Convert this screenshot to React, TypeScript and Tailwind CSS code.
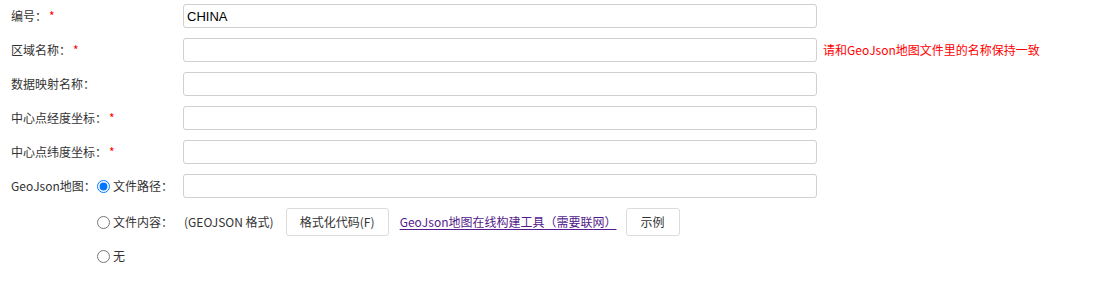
import React from 'react';

const font = { fontFamily: '"Noto Sans CJK SC", "Noto Sans", sans-serif' };

const Req = () => <span className="text-[#ff0000] ml-[2px]">*</span>;

const Field = ({ value = '' }: { value?: string }) => (
  <input
    defaultValue={value}
    className="w-[634px] h-[24px] border border-[#d0d0d0] rounded-[3px] px-[3px] text-[13px] text-black outline-none font-['Liberation_Sans',Arial,sans-serif]"
  />
);

const Radio = ({ checked = false, name }: { checked?: boolean; name: string }) => (
  <input type="radio" name={name} defaultChecked={checked} className="m-0 w-[13px] h-[13px] accent-[#0075ff]" />
);

export default function App() {
  return (
    <div className="w-[1095px] h-[290px] bg-white text-[12px] text-[#333]" style={font}>
      <div className="flex flex-col gap-[10px] pt-[4px]">
        <div className="flex items-center h-[24px]">
          <div className="w-[183px] pl-[11px]">编号：<Req /></div>
          <Field value="CHINA" />
        </div>
        <div className="flex items-center h-[24px]">
          <div className="w-[183px] pl-[11px]">区域名称：<Req /></div>
          <Field />
          <span className="ml-[6px] text-[#ff0000]">请和GeoJson地图文件里的名称保持一致</span>
        </div>
        <div className="flex items-center h-[24px]">
          <div className="w-[183px] pl-[11px]">数据映射名称：</div>
          <Field />
        </div>
        <div className="flex items-center h-[24px]">
          <div className="w-[183px] pl-[11px]">中心点经度坐标：<Req /></div>
          <Field />
        </div>
        <div className="flex items-center h-[24px]">
          <div className="w-[183px] pl-[11px]">中心点纬度坐标：<Req /></div>
          <Field />
        </div>
        <div className="flex items-center h-[24px]">
          <div className="w-[183px] pl-[11px] flex items-center">
            <span className="w-[86px]">GeoJson地图：</span>
            <Radio name="geo" checked />
            <span className="ml-[3px]">文件路径：</span>
          </div>
          <Field />
        </div>
        <div className="flex items-center h-[28px]">
          <div className="w-[184px] pl-[97px] flex items-center">
            <Radio name="geo" />
            <span className="ml-[3px]">文件内容：</span>
          </div>
          <span>(GEOJSON 格式)</span>
          <button className="ml-[12px] h-[28px] w-[103px] border border-[#dcdcdc] rounded-[3px] bg-white text-[#333]">
            格式化代码(F)
          </button>
          <a href="#" className="ml-[11px] text-[#551a8b] underline underline-offset-2">
            GeoJson地图在线构建工具（需要联网）
          </a>
          <button className="ml-[9px] h-[28px] w-[54px] border border-[#dcdcdc] rounded-[3px] bg-white text-[#333]">
            示例
          </button>
        </div>
        <div className="flex items-center h-[20px]">
          <div className="pl-[97px] flex items-center">
            <Radio name="geo" />
            <span className="ml-[3px]">无</span>
          </div>
        </div>
      </div>
    </div>
  );
}
